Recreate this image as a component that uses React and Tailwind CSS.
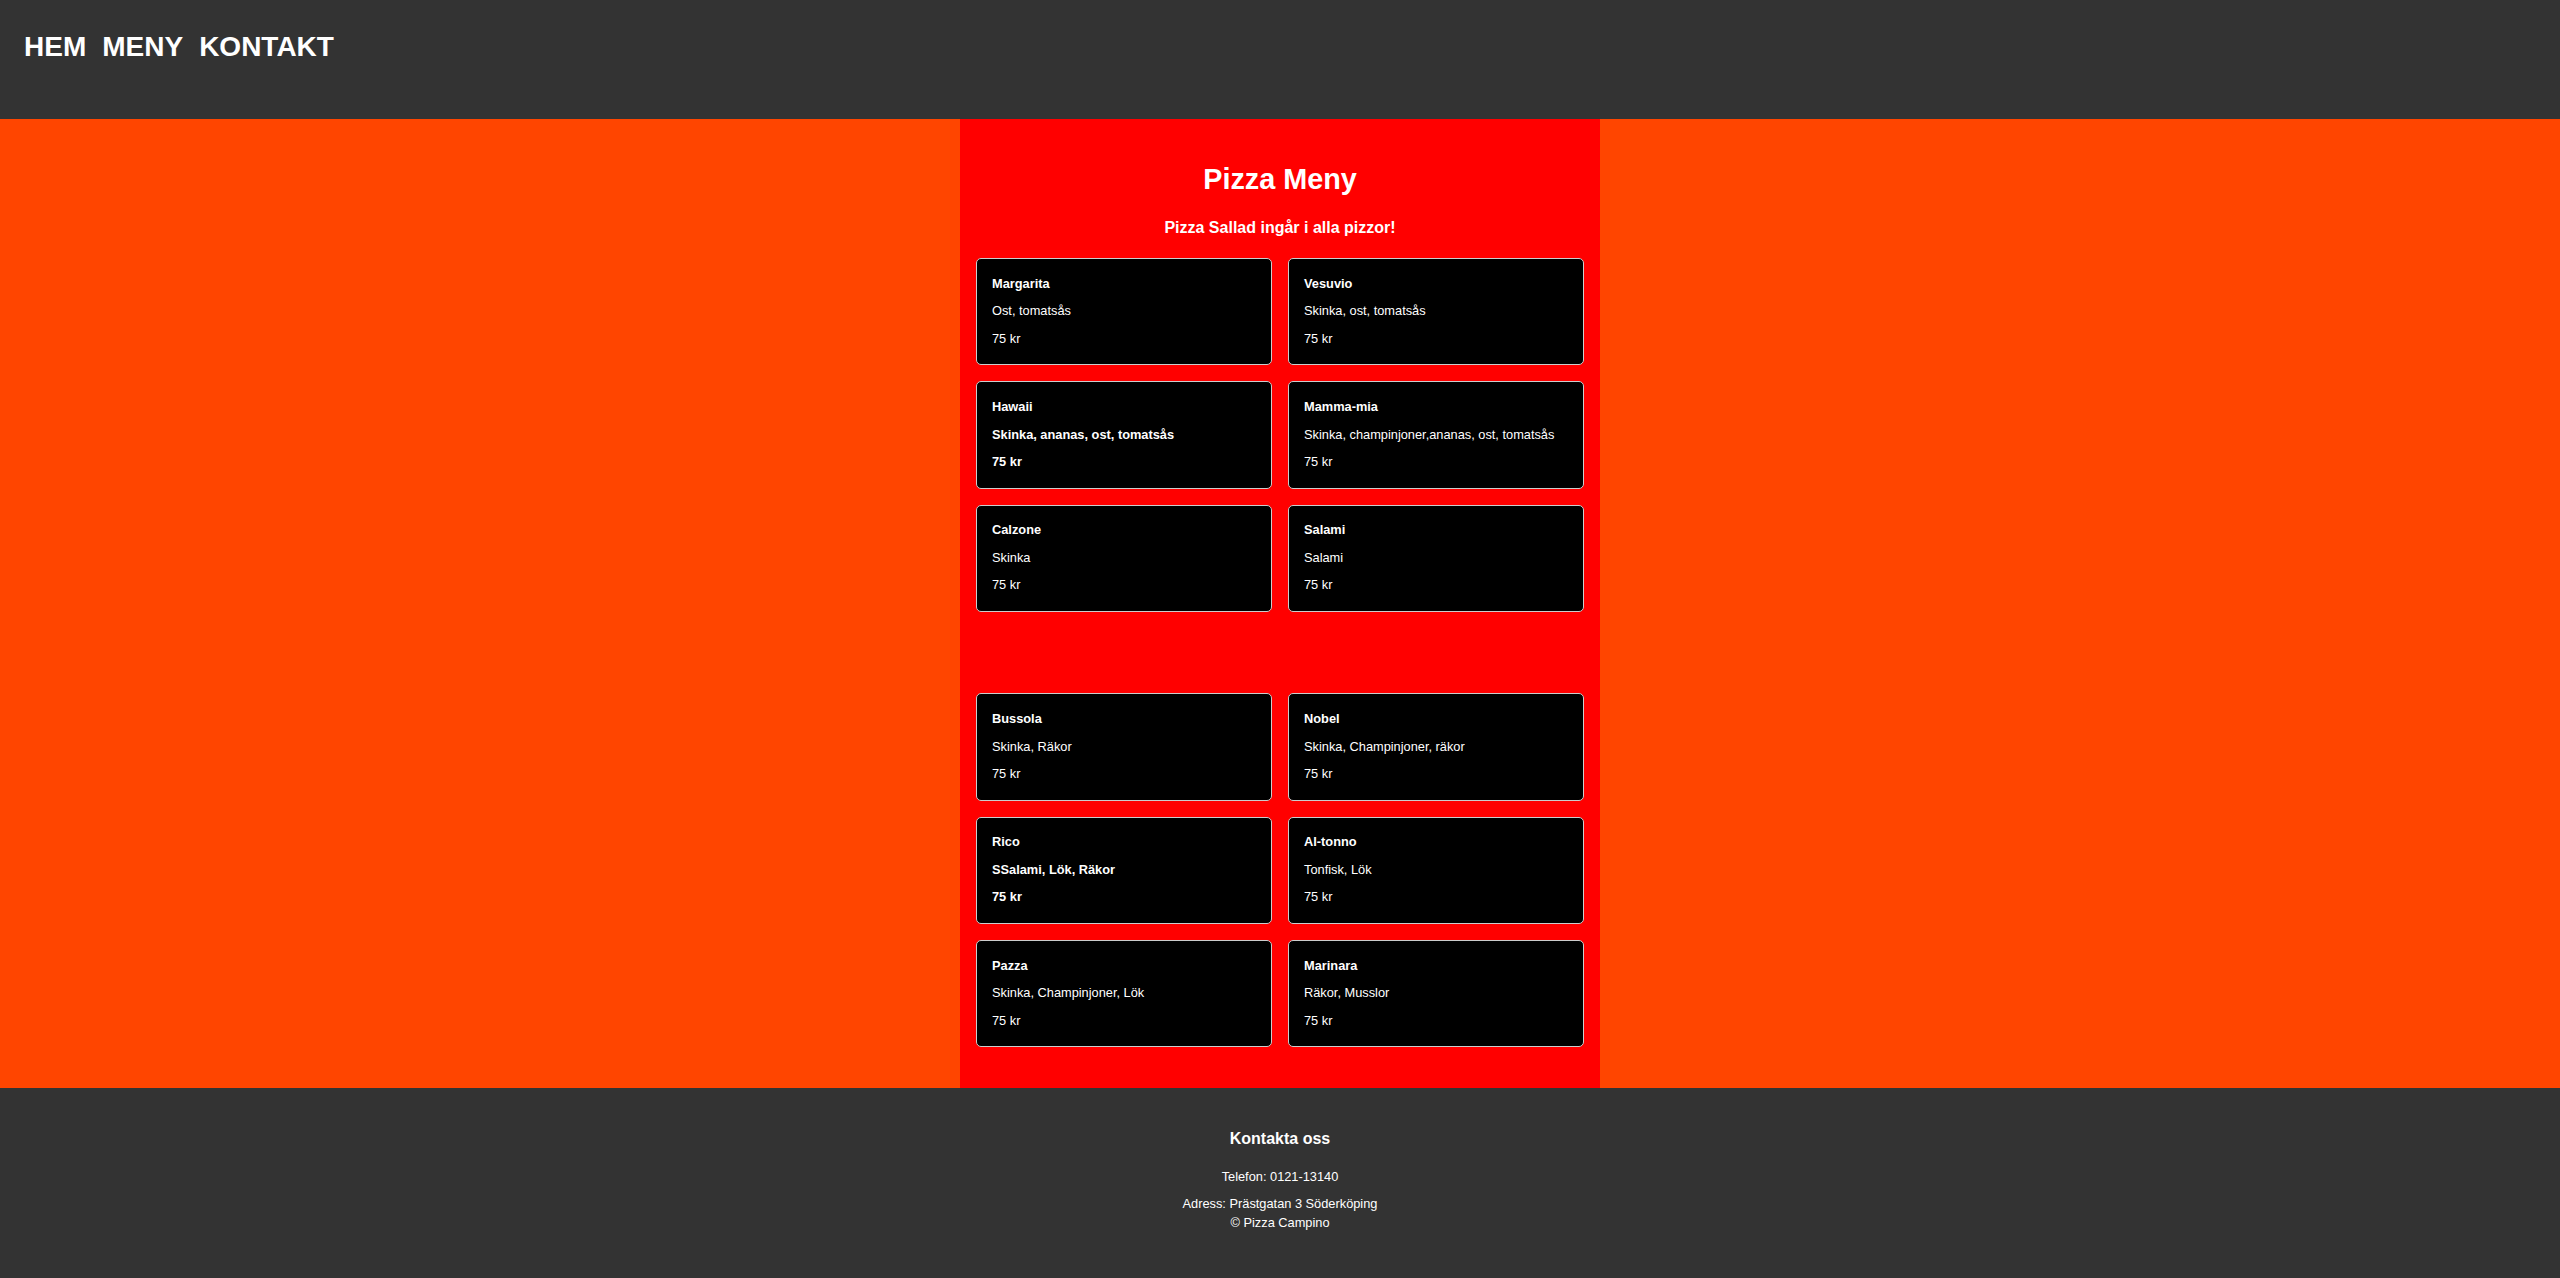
const pizzorA = [
    { name: 'Margarita', desc: 'Ost, tomatsås', price: '75 kr' },
    { name: 'Vesuvio', desc: 'Skinka, ost, tomatsås', price: '75 kr' },
    { name: 'Hawaii', desc: 'Skinka, ananas, ost, tomatsås', price: '75 kr', bold: true },
    { name: 'Mamma-mia', desc: 'Skinka, champinjoner,ananas, ost, tomatsås', price: '75 kr' },
    { name: 'Calzone', desc: 'Skinka', price: '75 kr' },
    { name: 'Salami', desc: 'Salami', price: '75 kr' },
];

const pizzorB = [
    { name: 'Bussola', desc: 'Skinka, Räkor', price: '75 kr' },
    { name: 'Nobel', desc: 'Skinka, Champinjoner, räkor', price: '75 kr' },
    { name: 'Rico', desc: 'SSalami, Lök, Räkor', price: '75 kr', bold: true },
    { name: 'Al-tonno', desc: 'Tonfisk, Lök', price: '75 kr' },
    { name: 'Pazza', desc: 'Skinka, Champinjoner, Lök', price: '75 kr' },
    { name: 'Marinara', desc: 'Räkor, Musslor', price: '75 kr' },
];

const PizzaCard = ({ pizza }) => (
    <div className={`bg-black border border-[#cccccc] rounded-[5px] px-[15px] py-[5px] text-white text-[12.8px] leading-[14.7px] ${pizza.bold ? 'font-bold' : ''}`}>
        <p className="my-[12.8px] font-bold">{pizza.name}</p>
        <p className="my-[12.8px]">{pizza.desc}</p>
        <p className="my-[12.8px]">{pizza.price}</p>
    </div>
);

const PizzaGrid = ({ items, className = '' }) => (
    <div className={`grid grid-cols-2 gap-4 ${className}`}>
        {items.map(p => (
            <PizzaCard key={p.name} pizza={p} />
        ))}
    </div>
);

export default function App() {
    return (
        <div className="min-h-screen flex flex-col bg-[#ff4500] font-['Liberation_Sans',Arial,sans-serif] text-white">
            {/* Header */}
            <header className="bg-[#333333] h-[119px] pl-6 pt-[31px]">
                <nav className="flex gap-[16px] text-[28px] font-bold leading-[normal]">
                    <a href="#" className="text-white">HEM</a>
                    <a href="#" className="text-white">MENY</a>
                    <a href="#" className="text-white">KONTAKT</a>
                </nav>
            </header>

            {/* Meny */}
            <main className="w-[640px] mx-auto bg-[#ff0000] px-4 pt-[44px] pb-[41px]">
                <h1 className="text-center text-[28.8px] font-bold leading-[33px]">Pizza Meny</h1>
                <h3 className="text-center text-[16px] font-bold leading-[18.4px] mt-[23px]">Pizza Sallad ingår i alla pizzor!</h3>
                <PizzaGrid items={pizzorA} className="mt-[20.5px]" />
                <PizzaGrid items={pizzorB} className="mt-[81.5px]" />
            </main>

            {/* Footer */}
            <footer className="flex-1 bg-[#333333] text-center pt-[42px] pb-[46px]">
                <h3 className="text-[16px] font-bold leading-[18.4px]">Kontakta oss</h3>
                <p className="text-[12.8px] leading-[14.7px] mt-[21px]">Telefon: 0121-13140</p>
                <p className="text-[12.8px] leading-[18.4px] mt-[11px]">
                    Adress: Prästgatan 3 Söderköping
                    <br />
                    © Pizza Campino
                </p>
            </footer>
        </div>
    );
}
